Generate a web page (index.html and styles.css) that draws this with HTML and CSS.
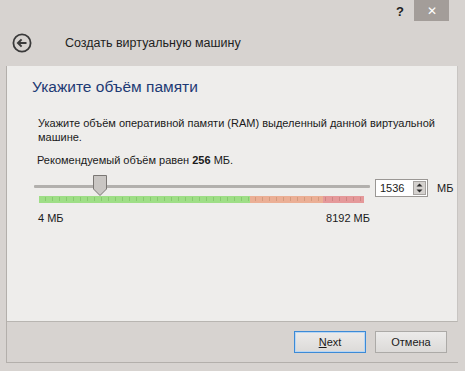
FILE: index.html
```html
<!DOCTYPE html>
<html lang="ru">
<head>
    <meta charset="UTF-8">
    <title>Создать виртуальную машину</title>
    <link rel="stylesheet" href="styles.css">
</head>
<body>

<div class="titlebar">
    <span class="help">?</span>
    <span class="close">&#x2715;</span>
</div>

<div class="header">
    <svg class="back" width="20" height="20" viewBox="0 0 20 20">
        <circle cx="10" cy="10" r="8.6" fill="none" stroke="#3a3a3a" stroke-width="1.8"/>
        <path d="M14.5 10H6.2M9.6 6.4L6 10l3.6 3.6" fill="none" stroke="#3a3a3a" stroke-width="2"/>
    </svg>
    <span class="title">Создать виртуальную машину</span>
</div>

<div class="frame">
    <div class="panel">
        <h1>Укажите объём памяти</h1>
        <p class="desc">Укажите объём оперативной памяти (RAM) выделенный данной виртуальной машине.</p>
        <p class="rec">Рекомендуемый объём равен <b>256</b> МБ.</p>

        <div class="memory">
            <div class="slider">
                <div class="track"></div>
                <svg class="thumb" width="14" height="21" viewBox="0 0 14 21">
                    <path d="M0.5 0.5H13.5V14L7 20.5L0.5 14Z" fill="#c9c6c3" stroke="#7a7774"/>
                </svg>
                <div class="scale">
                    <div class="zone green"></div>
                    <div class="zone orange"></div>
                    <div class="zone red"></div>
                </div>
                <div class="limits">
                    <span>4 МБ</span>
                    <span>8192 МБ</span>
                </div>
            </div>
            <div class="spin">
                <span class="value">1536</span>
                <svg class="arrows" width="13" height="14" viewBox="0 0 13 14">
                    <rect x="0.5" y="0.5" width="12" height="13" fill="#d4d1ce" stroke="#a5a29f"/>
                    <path d="M6.5 2.5L9.5 5.5H3.5Z" fill="#2a2a2a"/>
                    <path d="M6.5 11.5L9.5 8.5H3.5Z" fill="#2a2a2a"/>
                </svg>
            </div>
            <span class="unit">МБ</span>
        </div>
    </div>

    <div class="footer">
        <button class="btn default"><u>N</u>ext</button>
        <button class="btn">Отмена</button>
    </div>
</div>

</body>
</html>
```

FILE: styles.css
```css
body {
    margin: 0;
    width: 465px;
    height: 371px;
    background-color: #d7d3d0;
    font-family: "Liberation Sans", Arial, sans-serif;
    color: #1a1a1a;
    overflow: hidden;
}
.titlebar {
    height: 21px;
    display: flex;
    justify-content: flex-end;
    align-items: stretch;
    padding-right: 16px;
}
.help {
    font-weight: bold;
    font-size: 13px;
    line-height: 24px;
    color: #222;
    margin-right: 10px;
}
.close {
    width: 35px;
    background-color: #a39d99;
    color: #fff;
    font-size: 12px;
    line-height: 22px;
    text-align: center;
}
.header {
    height: 45px;
    display: flex;
    align-items: center;
    padding-left: 12px;
    box-sizing: border-box;
    padding-bottom: 2px;
}
.back {
    margin-right: 33px;
}
.title {
    font-size: 12.5px;
    color: #1e1e1e;
}
.frame {
    margin-left: 6px;
    width: 452px;
    height: 297px;
    border-left: 1px solid #b3afab;
    border-bottom: 1px solid #b3afab;
    box-sizing: border-box;
    display: flex;
    flex-direction: column;
}
.panel {
    height: 256px;
    background-color: #eeedeb;
    border-bottom: 1px solid #b8b5b1;
    border-right: 1px solid #c8c5c2;
    box-sizing: border-box;
    padding: 12px 0 0 25px;
}
h1 {
    margin: 0 0 20px 0;
    font-weight: normal;
    font-size: 15.5px;
    color: #1d3a74;
}
.desc {
    margin: 0 0 9px 6px;
    font-size: 11px;
    line-height: 14px;
    width: 400px;
}
.rec {
    margin: 0 0 8px 5px;
    font-size: 11px;
    line-height: 14px;
}
.memory {
    display: flex;
    align-items: flex-start;
}
.slider {
    position: relative;
    flex: none;
    width: 336px;
    margin-left: 2px;
    padding-top: 10px;
}
.track {
    height: 3px;
    background-color: #b2b0ad;
    border-radius: 1px;
}
.thumb {
    position: absolute;
    left: 59px;
    top: 0;
}
.scale {
    display: flex;
    height: 7px;
    margin: 8px 5px 0 5px;
    background-image: repeating-linear-gradient(90deg, transparent 0 6px, #5b6b52 6px 7px);
    background-size: 100% 4px;
    background-repeat: no-repeat;
    background-position: 0 1px;
}
.zone {
    height: 7px;
    opacity: 0.85;
}
.green {
    width: 211px;
    background-color: #8fdb74;
}
.orange {
    width: 73px;
    background-color: #eaa386;
}
.red {
    width: 41px;
    background-color: #e38a8c;
}
.limits {
    display: flex;
    justify-content: space-between;
    margin: 9px 0 0 4px;
    font-size: 11px;
}
.spin {
    flex: none;
    margin-top: 4px;
    margin-left: 5px;
    width: 53px;
    height: 18px;
    border: 1px solid #9a9794;
    background-color: #fff;
    display: flex;
    justify-content: space-between;
    align-items: center;
    padding-right: 1px;
    box-sizing: border-box;
}
.value {
    font-size: 11px;
    line-height: 16px;
    padding-left: 4px;
}
.unit {
    flex: none;
    font-size: 11px;
    margin: 7px 0 0 9px;
}
.footer {
    flex: 1;
    display: flex;
    justify-content: flex-end;
    align-items: flex-start;
    padding: 9px 11px 0 0;
    gap: 9px;
}
.btn {
    width: 72px;
    height: 22px;
    font-family: "Liberation Sans", Arial, sans-serif;
    font-size: 11px;
    color: #1a1a1a;
    background: linear-gradient(#ecebea, #dcdad8);
    border: 1px solid #acaaa7;
    padding: 0;
}
.btn.default {
    border-color: #3c8ad6;
    box-shadow: inset 0 0 0 1px #b8d6f3;
}
```
